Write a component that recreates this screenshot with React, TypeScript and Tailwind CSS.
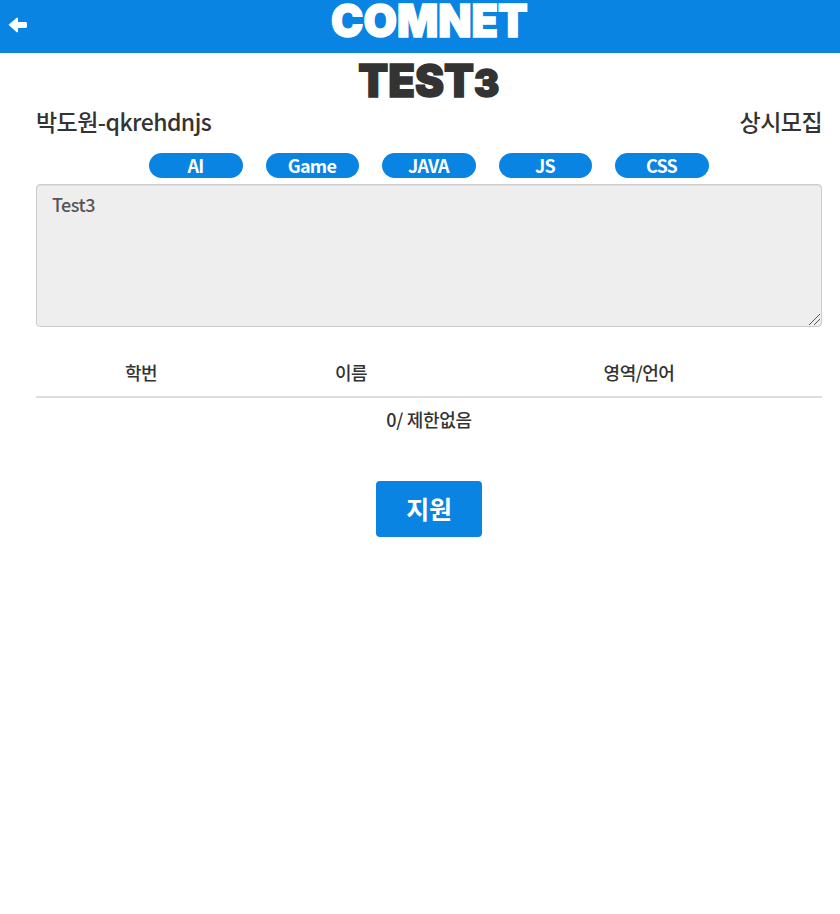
const tags = ["AI", "Game", "JAVA", "JS", "CSS"];

export default function App() {
  return (
    <div className="min-h-[914px] w-full bg-white font-['Noto_Sans_CJK_KR','Noto_Sans',sans-serif] font-medium tracking-[-0.5px] text-[#333]">
      <header className="flex h-[53px] items-start bg-[#0984e3]">
        <svg className="mt-[17px] ml-2 h-4 w-5 shrink-0" viewBox="0 0 20 16" fill="#fff" aria-label="뒤로">
          <path d="M0.5 7.7 8.7 0.8h1.3v4.2h8l1 1v4l-1 1h-8v4.2H8.7Z" />
        </svg>
        <h1 className="flex flex-1 justify-center pr-[10px] font-['Inter',sans-serif] text-[45px] leading-[42px] font-black tracking-normal text-white">
          <span className="inline-block scale-x-[0.96] [-webkit-text-stroke:1.5px_#fff]">COMNET</span>
        </h1>
      </header>

      <main className="pr-[18px] pl-9">
        <h2 className="flex h-[52px] justify-center font-['Inter',sans-serif] text-[45px] leading-[55px] font-black tracking-normal">
          <span className="inline-block scale-x-[0.97] [-webkit-text-stroke:1.5px_#333]">
            TEST<span className="inline-block text-[39px] leading-none">3</span>
          </span>
        </h2>

        <div className="flex h-[48px] justify-between text-[23px] leading-[33px] tracking-[-0.55px]">
          <span>박도원-qkrehdnjs</span>
          <span>상시모집</span>
        </div>

        <div className="flex justify-center gap-[22.7px]">
          {tags.map((tag) => (
            <span key={tag} className="flex h-[25px] w-[93.8px] items-center justify-center rounded-full bg-[#0984e3] pr-px pb-px text-[18px] font-bold tracking-[-0.75px] text-white">
              {tag}
            </span>
          ))}
        </div>

        <div className="relative mt-[6px]">
          <textarea
            readOnly
            defaultValue="Test3"
            className="block h-[143px] w-full resize-none rounded-[4px] border border-[#ccc] bg-[#eee] px-[15px] py-[6px] text-[18px] leading-[26px] tracking-[-0.5px] text-[#555] shadow-[inset_0_1px_1px_rgba(0,0,0,0.075)] outline-none"
          />
          <svg className="pointer-events-none absolute right-[2px] bottom-[2px] h-[11px] w-[11px]" viewBox="0 0 11 11" stroke="#555" strokeWidth="1" aria-hidden="true">
            <path d="M0 11 11 0M5 11 11 5" />
          </svg>
        </div>

        <div className="mt-[26px] grid h-[45px] grid-cols-[210px_210px_366px] items-center border-b-2 border-[#ddd] pb-[5px] text-center text-[18px] leading-[26px]">
          <span>학번</span>
          <span>이름</span>
          <span>영역/언어</span>
        </div>
        <p className="mt-[8px] text-center text-[18px] leading-[26px] tracking-[-0.3px]">0/ 제한없음</p>

        <div className="mt-[49px] flex justify-center">
          <button className="h-14 w-[106px] rounded-[4px] bg-[#0984e3] text-[25px] font-bold text-white tracking-[-0.2px]">지원</button>
        </div>
      </main>
    </div>
  );
}
